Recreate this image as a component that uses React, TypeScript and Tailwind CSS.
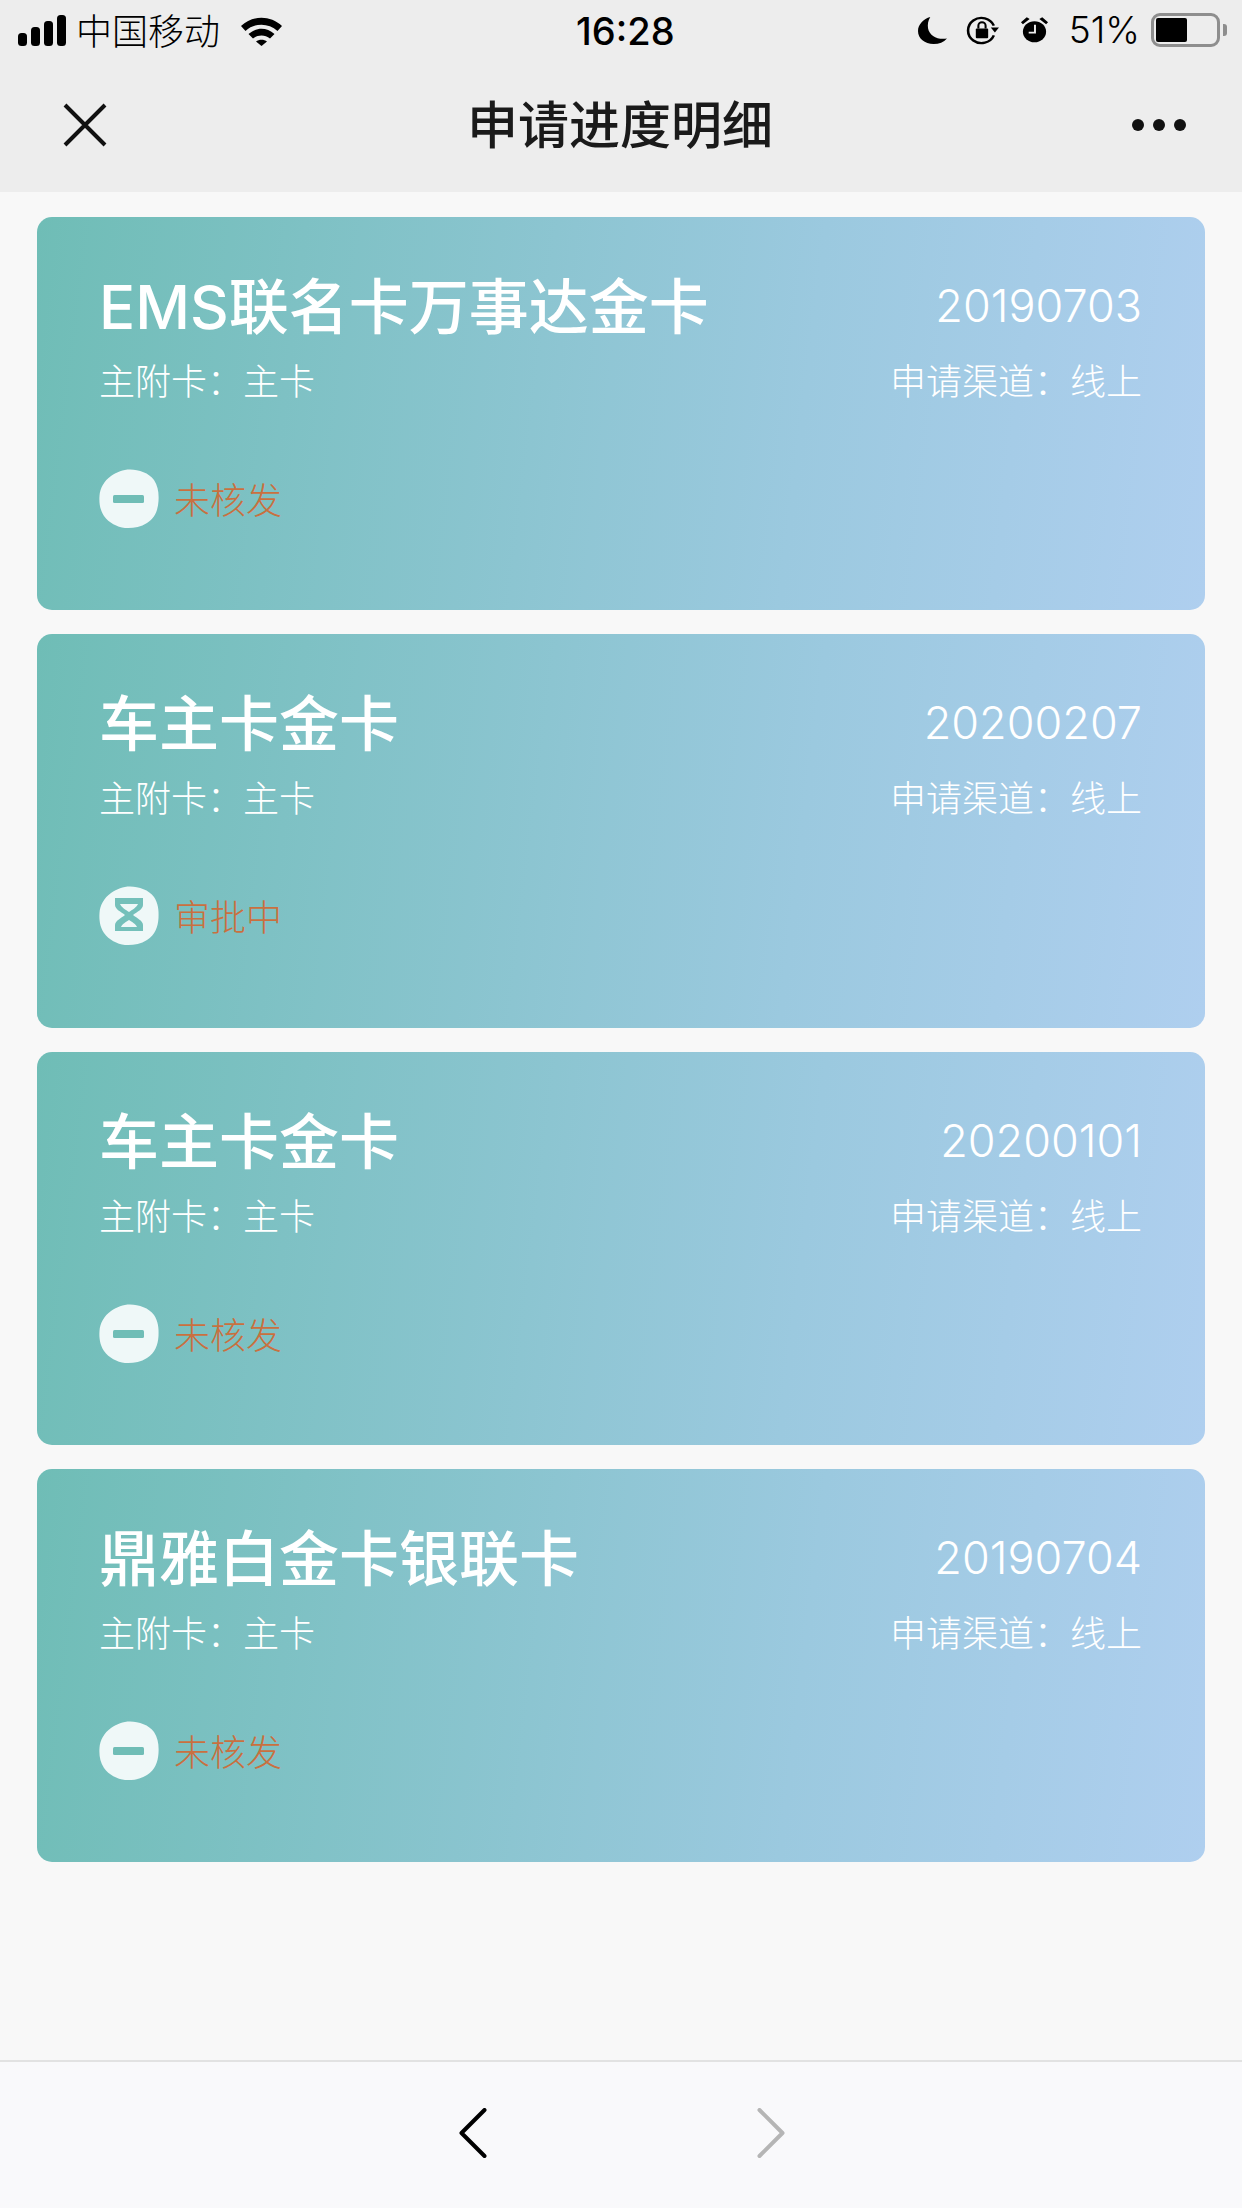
const cjk = { fontFamily: '"Liberation Sans","Noto Sans CJK SC",sans-serif' };

const cards = [
  { title: "EMS联名卡万事达金卡", date: "20190703", status: "未核发", kind: "minus" },
  { title: "车主卡金卡", date: "20200207", status: "审批中", kind: "hourglass" },
  { title: "车主卡金卡", date: "20200101", status: "未核发", kind: "minus" },
  { title: "鼎雅白金卡银联卡", date: "20190704", status: "未核发", kind: "minus" },
];

function StatusIcon({ kind }: { kind: string }) {
  return (
    <svg width="60" height="60" viewBox="0 0 60 60" className="shrink-0">
      <path
        d="M31 0.500C40 0.500 50 4 55 11C59 17 60 24 59.500 32C59 41 56 49 48 54C41 58.500 33 59.500 26 59C18 58 10 54 5 47C1 41 0 34 0.500 27C1 19 5 12 12 7C18 3 24 0.500 31 0.500Z"
        fill="#eff8f8"
      />
      {kind === "minus" ? (
        <rect x="14" y="26" width="31" height="8" rx="1.500" fill="#6fbdb6" />
      ) : (
        <g fill="#74c0ba">
          <path d="M16 12H44V19C44 23 38 26 34 29C38 32 44 35 44 39V45H16V39C16 35 22 32 26 29C22 26 16 23 16 19Z" />
          <path d="M21 18H39C38 21 33 24 30 26C27 24 22 21 21 18Z" fill="#eff8f8" />
          <path d="M30 34C33 36 37 38 38 41H22C23 38 27 36 30 34Z" fill="#eff8f8" />
        </g>
      )}
    </svg>
  );
}

function Card({ c }: { c: (typeof cards)[number] }) {
  return (
    <div className="h-[393.3px] rounded-[15px] bg-[linear-gradient(97deg,#6fbdb6_0%,#9bc9df_65%,#afcfef_100%)] pl-[63px] pr-[63px] pt-[60px] text-white">
      <div className="flex h-[60px] items-center justify-between">
        <span className="ml-[-1px] text-[60px] leading-[60px] font-medium" style={{ fontFamily: '"Inter","Noto Sans CJK SC",sans-serif' }}>
          {c.title}
        </span>
        <span className="mb-[2px] text-[45px] leading-[60px] font-light" style={{ fontFamily: '"Inter",sans-serif' }}>
          {c.date}
        </span>
      </div>
      <div className="mt-[28px] flex h-[36px] items-center justify-between text-[36px] leading-[36px] font-light" style={cjk}>
        <span className="ml-[-1px]">主附卡：主卡</span>
        <span>申请渠道：线上</span>
      </div>
      <div className="mt-[68px] ml-[-1px] flex h-[60px] items-center gap-[15px]">
        <StatusIcon kind={c.kind} />
        <span className="pt-[6px] text-[36px] leading-[36px] text-[#c9703f] font-light" style={cjk}>
          {c.status}
        </span>
      </div>
    </div>
  );
}

export default function App() {
  return (
    <div className="flex h-[2208px] w-[1242px] flex-col overflow-hidden bg-[#f8f8f8]">
      <header className="h-[192px] shrink-0 bg-[#ededed]">
        <div className="relative flex h-[60px] items-center justify-between pl-[18px] pr-[15px] text-black">
          <div className="flex items-center">
            <svg width="49" height="31" viewBox="0 0 49 31">
              <rect x="0" y="18" width="9" height="13" rx="3.500" fill="#000" />
              <rect x="13" y="12" width="9" height="19" rx="3.500" fill="#000" />
              <rect x="26" y="6" width="9" height="25" rx="3.500" fill="#000" />
              <rect x="39" y="0" width="9" height="31" rx="3.500" fill="#000" />
            </svg>
            <span className="ml-[9px] pt-[5px] text-[36px] leading-[40px] font-light" style={cjk}>中国移动</span>
            <svg width="43" height="31" viewBox="0 0 42 31" className="ml-[20px]">
              <path d="M0.500 11C12 0 30 0 41.500 11L37 16C28 7.500 14 7.500 5 16Z" fill="#000" />
              <path d="M8 19C16 12 26 12 34 19L29.500 23.500C24.500 19.500 17.500 19.500 12.500 23.500Z" fill="#000" />
              <path d="M15.500 26.500C18.500 24 23.500 24 26.500 26.500L21 31Z" fill="#000" />
            </svg>
          </div>
          <span className="absolute left-[576px] top-[10px] text-[38px] leading-[42px] font-medium" style={{ fontFamily: '"Inter",sans-serif' }}>16:28</span>
          <div className="flex items-center">
            <svg width="29" height="27" viewBox="0 0 26 29" preserveAspectRatio="none">
              <path d="M11 0C5 2 0 8 0 15C0 23 6 29 14 29C19 29 23 27 26 23C18 25 10 20 9 12C8.500 8 9 4 11 0Z" fill="#000" />
            </svg>
            <svg width="33" height="31" viewBox="0 0 32 32" className="ml-[19px]" preserveAspectRatio="none">
              <path d="M27 21A13 13 0 1 1 27 11" fill="none" stroke="#000" strokeWidth="2.500" />
              <path d="M24 13H32L28 18Z" fill="#000" />
              <rect x="9.500" y="14" width="12" height="10" rx="1" fill="#000" />
              <path d="M12 14V11A3.500 3.500 0 0 1 19 11V14" fill="none" stroke="#000" strokeWidth="2" />
            </svg>
            <svg width="29" height="28" viewBox="0 0 30 32" className="ml-[21px]" preserveAspectRatio="none">
              <circle cx="15" cy="18" r="12" fill="#000" />
              <path d="M1 7L7 1.500L10 3.500L3 9.500Z M29 7L23 1.500L20 3.500L27 9.500Z" fill="#000" />
              <path d="M15.500 10V19H9" fill="none" stroke="#ededed" strokeWidth="2" />
            </svg>
            <span className="ml-[20px] text-[37px] leading-[40px] font-light" style={{ fontFamily: '"Inter",sans-serif' }}>51%</span>
            <div className="ml-[11px] flex items-center">
              <div className="flex h-[34px] w-[69px] items-center rounded-[9px] border-[3px] border-[#8e8e8e] p-[2px]">
                <div className="h-full w-[31px] rounded-[2px] bg-black" />
              </div>
              <div className="ml-[3px] h-[12px] w-[4px] rounded-r-[3px] bg-[#8e8e8e]" />
            </div>
          </div>
        </div>
        <div className="flex h-[132px] items-center justify-between pb-[2px] pl-[62px] pr-[56px] text-[#1a1a1a]">
          <svg width="46" height="46" viewBox="0 0 46 46">
            <path d="M3 3L43 43M43 3L3 43" stroke="#111" strokeWidth="4" fill="none" />
          </svg>
          <h1 className="mt-[4px] text-[51px] leading-[60px] font-medium" style={cjk}>申请进度明细</h1>
          <div className="flex gap-[9px]">
            <span className="h-[12px] w-[12px] rounded-full bg-[#111]" />
            <span className="h-[12px] w-[12px] rounded-full bg-[#111]" />
            <span className="h-[12px] w-[12px] rounded-full bg-[#111]" />
          </div>
        </div>
      </header>

      <main className="flex flex-1 flex-col gap-[24px] px-[37px] pt-[25px]">
        {cards.map((c, i) => (
          <Card key={i} c={c} />
        ))}
      </main>

      <footer className="flex h-[148px] shrink-0 items-center border-t-[2px] border-[#e2e2e2] bg-[#f9f9fb] pb-[2px] pl-[459px]">
        <svg width="28" height="52" viewBox="0 0 28 52">
          <path d="M25.500 2L2.500 25L25.500 48" fill="none" stroke="#000" strokeWidth="4" strokeLinecap="round" strokeLinejoin="round" />
        </svg>
        <svg width="28" height="52" viewBox="0 0 28 52" className="ml-[270px]">
          <path d="M2.500 2L25.500 25L2.500 48" fill="none" stroke="#b5b5b5" strokeWidth="4" strokeLinecap="round" strokeLinejoin="round" />
        </svg>
      </footer>
    </div>
  );
}
